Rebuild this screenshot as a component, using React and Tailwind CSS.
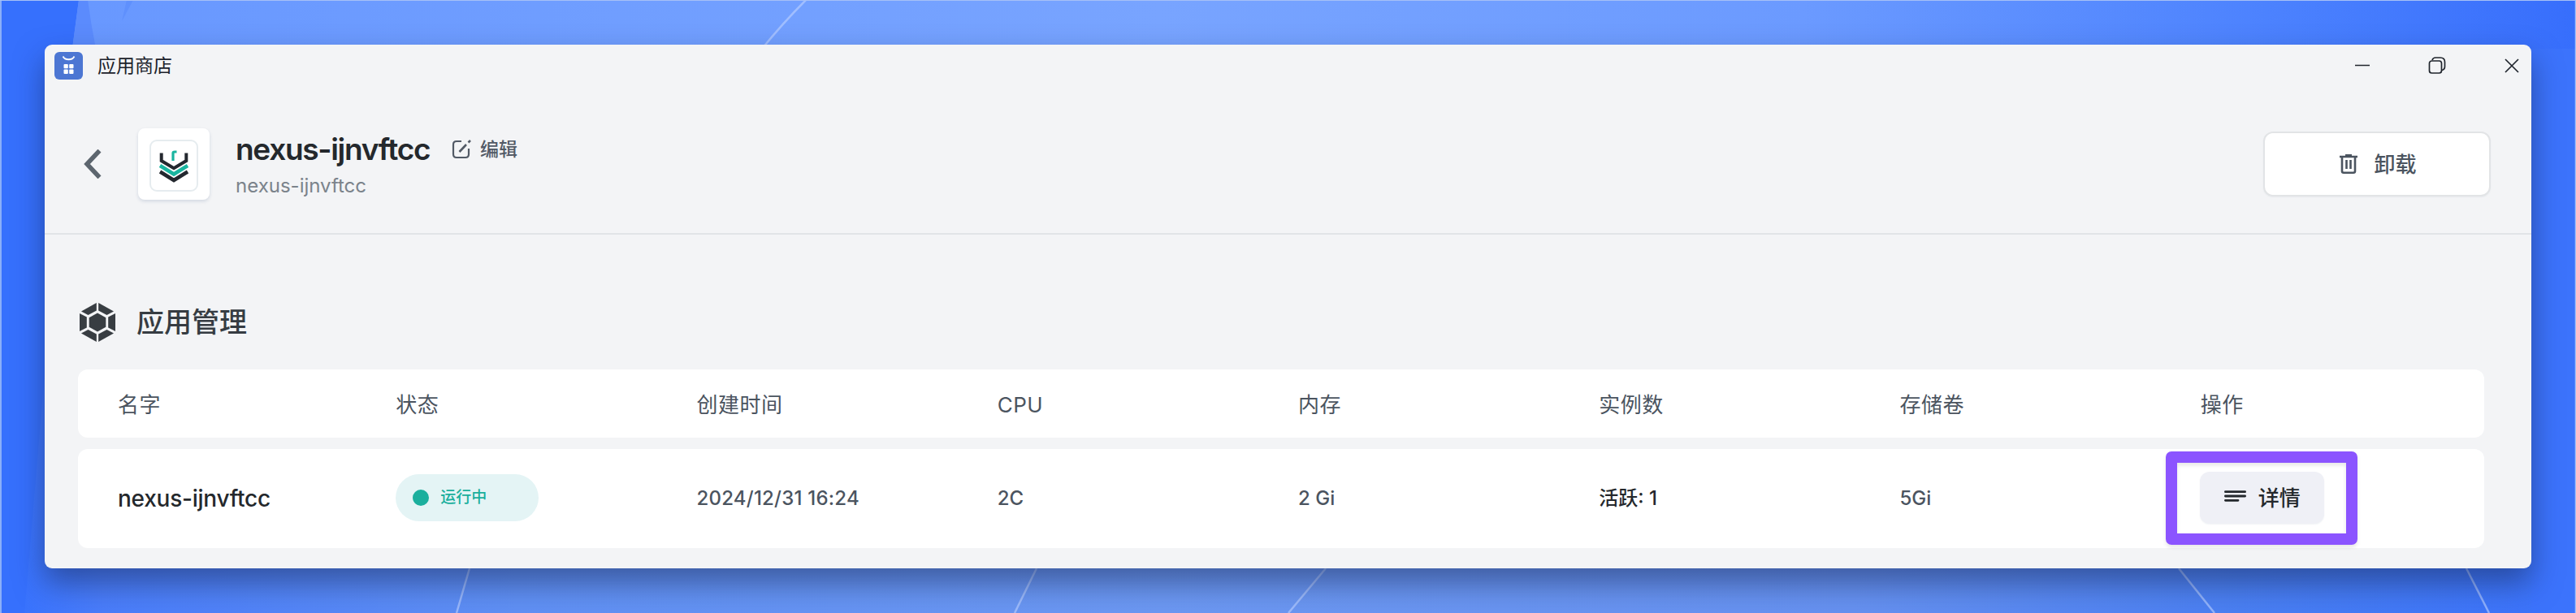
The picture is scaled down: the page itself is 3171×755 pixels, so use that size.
const columns = ['名字', '状态', '创建时间', 'CPU', '内存', '实例数', '存储卷', '操作'];

function Wallpaper() {
  return (
    <svg className="absolute inset-0 h-[755px] w-[3171px]" viewBox="0 0 3171 755" preserveAspectRatio="none">
      <defs>
        <linearGradient id="top" x1="0" x2="1" y1="0" y2="0">
          <stop offset="0" stopColor="#6797ff" />
          <stop offset="0.45" stopColor="#78a4ff" />
          <stop offset="0.7" stopColor="#6b9aff" />
          <stop offset="0.88" stopColor="#4c82fe" />
          <stop offset="1" stopColor="#376efc" />
        </linearGradient>
        <linearGradient id="bottom" x1="0" x2="1" y1="0" y2="0">
          <stop offset="0" stopColor="#3470ff" />
          <stop offset="0.04" stopColor="#4a7dfa" />
          <stop offset="0.2" stopColor="#6090f4" />
          <stop offset="0.45" stopColor="#6c98f2" />
          <stop offset="0.72" stopColor="#6691f0" />
          <stop offset="0.87" stopColor="#4a7ff2" />
          <stop offset="1" stopColor="#3a72fb" />
        </linearGradient>
      </defs>
      <rect width="3171" height="755" fill="url(#bottom)" />
      <rect width="3171" height="200" fill="url(#top)" />
      <path d="M0 0H97Q93 30 89 60L60 400L30 755H0Z" fill="#3670fd" />
      <path d="M97 0H108Q112 30 118 60H89Q93 30 97 0Z" fill="#5b8bfd" />
      <path d="M164 0L150 26L156 0Z" fill="#5f90fd" />
      <path d="M3116 60H3171V755H3116Z" fill="#3c73fc" />
      <g fill="none" stroke="#b9ceff" strokeWidth="2.5" opacity="0.65">
        <path d="M992 0Q964 28 938 60" />
        <path d="M578 700L562 755" />
        <path d="M1276 700L1249 755" />
        <path d="M1632 700L1586 755" />
        <path d="M2682 700L2726 755" />
        <path d="M3036 700L3064 755" />
      </g>
      <path d="M0 0.500H3171" stroke="#a6c0f6" />
      <path d="M1 0V755M3170.500 0V755" stroke="#a6c3f8" strokeWidth="1.500" />
    </svg>
  );
}

function StoreIcon() {
  return (
    <svg className="h-[34px] w-[35px]" viewBox="0 0 35 34">
      <rect width="35" height="34" rx="6" fill="#4c76d3" />
      <path d="M10.500 5.500C13 10.500 22 10.500 24.500 5.500" fill="none" stroke="#fff" strokeWidth="1.800" />
      <g fill="#fff">
        <rect x="11.500" y="15" width="5.300" height="5.300" rx="1" />
        <rect x="18.200" y="15" width="5.300" height="5.300" rx="1" />
        <rect x="11.500" y="21.600" width="5.300" height="5.300" rx="1" />
        <rect x="18.200" y="21.600" width="5.300" height="5.300" rx="1" />
      </g>
    </svg>
  );
}

function NexusLogo() {
  return (
    <svg className="h-[64px] w-[60px]" viewBox="0 0 60 64">
      <rect x="1" y="1" width="58" height="62" rx="8" fill="#fff" stroke="#e6ecef" strokeWidth="2" />
      <path d="M29 26V16.500Q29 15 31 15H33.500" fill="none" stroke="#1ab5a0" strokeWidth="3.200" />
      <path d="M14.700 16.500V26L30 35.200L45.300 26V16.500" fill="none" stroke="#24282f" strokeWidth="4" />
      <path d="M13 32L30 42.500L47 32" fill="none" stroke="#1ab5a0" strokeWidth="4.500" />
      <path d="M13 39.500L30 50L47 39.500" fill="none" stroke="#24282f" strokeWidth="4.500" />
    </svg>
  );
}

function HexIcon() {
  return (
    <svg className="ml-[2px] h-[48px] w-[44px]" viewBox="0 0 44 48" fill="#383d42">
      <path d="M20.800 0V9.500L10.500 15L2 10.500Z" />
      <path d="M23.200 0V9.500L33.500 15L42 10.500Z" />
      <path d="M0 13L8.800 17.500V30.500L0 35Z" />
      <path d="M44 13L35.200 17.500V30.500L44 35Z" />
      <path d="M20.800 48V38.500L10.500 33L2 37.500Z" />
      <path d="M23.200 48V38.500L33.500 33L42 37.500Z" />
      <path d="M22 12.500L32.300 18.200V29.800L22 35.500L11.700 29.800V18.200Z" />
    </svg>
  );
}

export default function App() {
  return (
    <div className="relative h-[755px] w-[3171px] overflow-hidden bg-[#3a72fd] font-[Inter,'Noto_Sans_CJK_SC',sans-serif]">
      <Wallpaper />
      <div className="relative px-[55px] pt-[55px]">
        <main className="h-[645px] w-[3061px] overflow-hidden rounded-[9px] bg-[#f3f4f6] shadow-[0_18px_36px_rgba(20,35,80,0.5)]">
          <header className="flex h-[52px] items-center pl-3">
            <StoreIcon />
            <span className="ml-[18px] text-[23px] leading-none text-[#1c222b]">应用商店</span>
            <svg className="ml-auto mr-[15px] h-[22px] w-[202px]" viewBox="0 0 202 22" fill="none" stroke="#20252d" strokeWidth="1.700">
              <path d="M0 10.500H18" />
              <rect x="91.500" y="5" width="15" height="15" rx="3" />
              <path d="M95 4Q96 1 99 1H105Q110.500 1 110.500 6.500V12Q110.500 15.500 107 16.500" />
              <path d="M185 3L201 19M201 3L185 19" />
            </svg>
          </header>

          <section className="flex h-[182px] items-center border-b-2 border-[#e1e4e7] pl-[48px] pr-[50px] pt-[10px]">
            <svg className="h-[36px] w-[22px]" viewBox="0 0 22 36">
              <path d="M19.500 1.500L4 18L19.500 34.500" fill="none" stroke="#5c656e" strokeWidth="5.500" />
            </svg>
            <div className="ml-[45px] flex h-[88px] w-[88px] items-center justify-center rounded-[8px] bg-white pt-1 shadow-[0_2px_4px_rgba(19,51,107,0.15)]">
              <NexusLogo />
            </div>
            <div className="ml-[32px] mt-[9px]">
              <div className="flex items-center">
                <h1 className="w-[240px] whitespace-nowrap text-[37px] font-semibold leading-[44px] tracking-[-1.3px] text-[#24282c]">nexus-ijnvftcc</h1>
                <svg className="ml-[26px] h-[24px] w-[25px]" viewBox="0 0 25 24" fill="none" stroke="#525a66" strokeWidth="2.200">
                  <path d="M12 2H6Q2 2 2 6V18Q2 22 6 22H17Q21 22 21 18V11" />
                  <path d="M9.500 15L18 6M20.500 3.500L23 1" strokeWidth="2.600" />
                </svg>
                <span className="ml-[10px] pt-px text-[23px] font-medium leading-none text-[#525a66]">编辑</span>
              </div>
              <p className="text-[24px] leading-[46px] text-[#7b838b]">nexus-ijnvftcc</p>
            </div>
            <button className="ml-auto flex h-[80px] w-[280px] items-center justify-center rounded-[12px] border-2 border-[#e2e4e6] bg-white pl-[3px] text-[26px] font-medium text-[#4b545f] shadow-[0_1px_2px_rgba(19,51,107,0.05)]">
              <svg className="mr-[20px] h-[24px] w-[22px]" viewBox="0 0 22 24" fill="none" stroke="#4b545f" strokeWidth="2.600">
                <path d="M0 3H22M7 1.200H15M3 3V21Q3 22.700 5 22.700H17Q19 22.700 19 21V3M8.500 7V18M13.500 7V18" />
              </svg>
              卸载
            </button>
          </section>

          <section className="px-[41px] pt-[80px]">
            <div className="flex h-[56px] items-center">
              <HexIcon />
              <h2 className="ml-[26px] text-[34px] font-medium leading-none text-[#363c42]">应用管理</h2>
            </div>
            <div className="mt-[30px] grid h-[84px] w-[2962px] grid-cols-8 items-center rounded-[12px] bg-white pt-[2px] text-[26px] tracking-[0.5px] text-[#4b545f]">
              {columns.map((name, i) => (
                <div key={name} className={i === 0 ? 'pl-[49px]' : 'pl-[21px]'}>{name}</div>
              ))}
            </div>
            <div className="relative mt-[14px] grid h-[122px] w-[2962px] grid-cols-8 items-center rounded-[12px] bg-white text-[24px] font-medium text-[#4b545f]">
              <div className="pl-[49px] text-[28px] tracking-[-0.25px] text-[#24282c]">nexus-ijnvftcc</div>
              <div className="pb-[2px] pl-[21px]">
                <div className="flex h-[58px] w-[176px] items-center rounded-full bg-[#e4f4f5] pl-[21px] text-[19px] text-[#1baf9d]">
                  <i className="mr-[14px] h-5 w-5 rounded-full bg-[#1baf9d]" />
                  运行中
                </div>
              </div>
              <div className="whitespace-nowrap pb-px pl-[21px] tracking-[0.22px]">2024/12/31 16:24</div>
              <div className="pb-px pl-[21px]">2C</div>
              <div className="pb-px pl-[21px]">2 Gi</div>
              <div className="pb-px pl-[21px] text-[#24282c]">活跃: 1</div>
              <div className="pb-px pl-[21px]">5Gi</div>
              <div className="pb-[2px] pl-[20px]">
                <button className="flex h-[64px] w-[153px] items-center rounded-[12px] bg-[#eff0f6] pl-[30px] text-[26px] text-[#24282c] shadow-[0_1px_2px_rgba(19,51,107,0.06)]">
                  <svg className="mb-[4px] mr-[15px] h-[16px] w-[27px]" viewBox="0 0 27 16" fill="none" stroke="#24282c" strokeWidth="2.800" strokeLinecap="round">
                    <path d="M1.400 2.700H25.600M1.400 8H25.600M1.400 13.300H17" />
                  </svg>
                  详情
                </button>
              </div>
              <div className="absolute left-[2570px] top-[3px] h-[115px] w-[236px] rounded-[7px] border-[14px] border-[#8b54ff] shadow-[0_3px_5px_rgba(0,0,0,0.1),inset_0_3px_5px_rgba(0,0,0,0.1)]" />
            </div>
          </section>
        </main>
      </div>
    </div>
  );
}
